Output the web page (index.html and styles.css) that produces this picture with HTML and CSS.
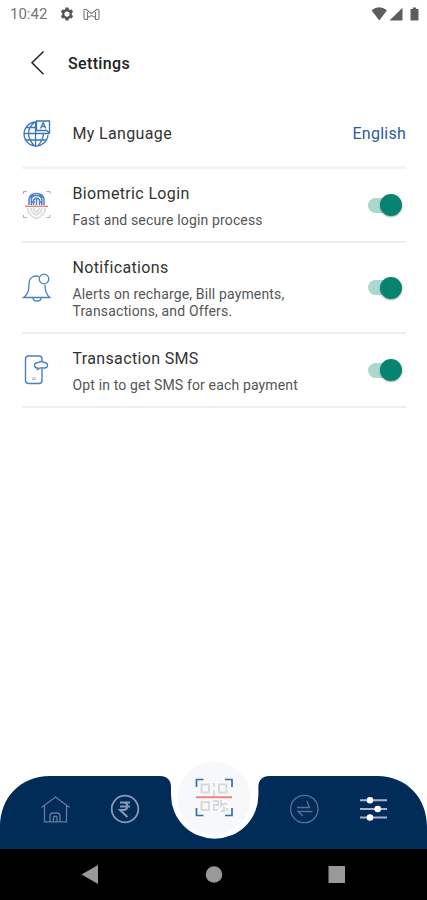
FILE: index.html
```html
<!DOCTYPE html>
<html lang="en">
<head>
<meta charset="utf-8">
<title>Settings</title>
<link rel="stylesheet" href="styles.css">
</head>
<body>
<div class="screen">
  <div class="status">
    <span class="clock">10:42</span>
    <svg class="gear" width="14" height="14" viewBox="0 0 24 24"><path fill="#555" fill-rule="evenodd" d="M9.5 1h5l.6 3 2 1.2 3-1 2.400 4.200-2.300 2v3.200l2.300 2-2.400 4.200-3-1-2 1.200-.6 3.200h-5l-.6-3.200-2-1.200-3 1-2.400-4.200 2.300-2v-3.200l-2.300-2 2.400-4.200 3 1 2-1.200zM12 7.500a4.500 4.500 0 1 0 0 9 4.500 4.500 0 0 0 0-9z"/></svg>
    <svg class="mail" width="17" height="13" viewBox="0 0 17 13"><g fill="none" stroke="#777" stroke-width="1.100"><path d="M4.500 4v7.500h-2a1.500 1.500 0 0 1-1.500-1.500V2.500q.3-1.500 2-1.200L8.500 5.500 14 1.300q1.700-.3 2 1.200V10a1.500 1.500 0 0 1-1.500 1.500h-2V4M4.500 9.500l4-2 4 2"/></g></svg>
    <svg class="signals" width="50" height="14" viewBox="0 0 50 14"><g fill="#5d5d5d"><path d="M.5 3.200Q8.300-2.700 16 3.200L8.300 13.500z"/><path d="M31.500.8v12.700H18.500z"/><path d="M39.500 2h2.300V.5h3.400V2h2.300v11.500h-8z"/></g></svg>
  </div>

  <header class="header">
    <svg width="15" height="26" viewBox="0 0 15 26"><path d="M13.500 1.500 2 12.700l11.500 11.500" fill="none" stroke="#222" stroke-width="1.500"/></svg>
    <h1>Settings</h1>
  </header>

  <main class="list">
    <section class="row language">
      <svg class="icon" width="30" height="30" viewBox="0 0 30 30"><g fill="none" stroke="#3975b8" stroke-width="1.300"><path d="M14 3A12 12 0 1 0 26 16M1.500 14.500H27M4 8.500h10M4 21h20M13.500 3v23.500M12 3.500Q1 14 12 26.500M16 26.500q5-5 5.500-12"/><path d="M14.500 2h13v12l-3-2.500h-10z" fill="#fff"/><path d="m18.500 9.500 2.700-6 2.700 6M19.500 7.500h3.500"/></g></svg>
      <div class="copy"><h2>My Language</h2></div>
      <span class="value">English</span>
    </section>

    <section class="row biometric">
      <svg class="icon" width="30" height="30" viewBox="0 0 30 30"><g fill="none"><path d="M1.500 4V1.500H5M24.500 1.500H28V4M28 25v2.500h-3.500M5 27.500H1.500V25" stroke="#aaa"/><path d="M6 18v3q2 5 8.500 7.500Q21 26 23 21v-3M9 18q0 5 5.500 7 5-2 5.500-7M12 18q0 3 2.500 4 2.500-1 2.500-4" stroke="#dcdee0" stroke-width="2"/><path d="M7 15V9q1-5.500 7.500-5.500T22 9v6M9.300 15V9q.7-3.500 5.200-3.500T19.800 9v6M11.500 15v-5q3-4 6 0v5M14.500 9v6M8 7l4-2M17 5l4 2M10 12h3M17 12h3" stroke="#4d84c0" stroke-width="1.500"/><path d="M3 16.300h23" stroke="#ec7777" stroke-width="1.300"/></g></svg>
      <div class="copy"><h2>Biometric Login</h2><p class="p-bio">Fast and secure login process</p></div>
      <span class="switch"></span>
    </section>

    <section class="row notifications">
      <svg class="icon" width="30" height="30" viewBox="0 0 30 30"><g fill="none" stroke="#4681be" stroke-width="1.300"><path d="M17 3.500Q14 2.300 10.500 4 7 6 7 11c0 6-.5 9-5 13.500h25.500q-4.500-4.500-4.500-12.500M.5 24.500h28M11 25q0 3 4 3t4-3"/><circle cx="22" cy="6" r="4.800"/></g></svg>
      <div class="copy"><h2>Notifications</h2><p class="p-alerts">Alerts on recharge, Bill payments,<br>Transactions, and Offers.</p></div>
      <span class="switch"></span>
    </section>

    <section class="row sms">
      <svg class="icon" width="30" height="30" viewBox="0 0 30 30"><g fill="none" stroke="#4681be" stroke-width="1.400"><path d="M20 6V4q0-3-3-3H6.500q-3 0-3 3v21.500q0 3 3 3H17q3 0 3-3V14"/><path d="M16.500 7.500q2.500-2 5.500 0 3.500 0 3.500 2.800t-3.500 2.700h-4l-2.500 1.500v-1.500q-3 0-3-2.700t4-2.800z"/><path d="M10.500 23q1.500-1 3 0v1.500h-3z" stroke="#b4bac0" stroke-width="1"/></g></svg>
      <div class="copy"><h2>Transaction SMS</h2><p class="p-sms">Opt in to get SMS for each payment</p></div>
      <span class="switch"></span>
    </section>
  </main>

  <nav class="tabs">
    <svg width="427" height="89" viewBox="0 0 427 89">
      <path fill="#022c58" d="M0 89V67C0 38 20 16 50 16h110c7 0 11 4 11 11v8a43.700 43.700 0 0 0 87.400 0v-8c0-7 4-11 11-11H377c30 0 50 22 50 51v22z"/>
      <circle cx="214" cy="38" r="36.500" fill="#f7f8f9"/>
      <g fill="none" stroke="#64799c" stroke-width="1.300"><path d="M41.500 47.500 55.500 37l14 10.500M44.500 45.500v16.300h22V45.500M50 61.800V56q0-3 3-3h4q3 0 3 3v5.800M53.500 61.500v-4.500q1.800-1.500 3.500 0v4.500"/></g>
      <g fill="none" stroke="#8798b5"><circle cx="125" cy="49" r="13.300" stroke-width="1.800"/><path d="M120 42.500h10M120 46.500h10M120 42.500h3.500c5 0 5 7.500 0 7.500H120l7.500 7" stroke-width="2"/></g>
      <g fill="none"><path d="M196.500 27v-7.500h7M225 19.500h7V27M232 48v7.500h-7M203.500 55.500h-7V48" stroke="#356eae" stroke-width="1.700"/><g stroke="#d8dadd" stroke-width="2"><path d="M201.500 24.500h7.500v8h-7.500zM219 24.500h7.500v8H219zM201.500 42h7.500v8h-7.500zM214 23v4M214 30v6"/><path d="M213 41h5v4h-4v5h4M221 40v4h6M220 47l5-4M221 51h3v-4M227 48v3" /></g><path d="M196 37.300h36" stroke="#ef857e" stroke-width="2"/></g>
      <g fill="none" stroke="#596f95" stroke-width="1.300"><circle cx="304.300" cy="49" r="13.700"/><path d="M297 47.500h12.500l-2.500-6.500M312.500 51.500H298l5 4.500"/></g>
      <g stroke="#a8b2cb" stroke-width="2"><path d="M360 40.300h27M360 49h27M360 57.500h27"/></g><g fill="#fff"><circle cx="370" cy="40.300" r="3.300"/><circle cx="377.700" cy="49" r="3.300"/><circle cx="370" cy="57.500" r="3.300"/></g>
    </svg>
  </nav>
  <div class="system">
    <svg width="427" height="51" viewBox="0 0 427 51"><g fill="#999"><path d="M81.500 25.500 98 16v19z"/><circle cx="214" cy="25.500" r="8.300"/><rect x="328.500" y="17" width="16.500" height="17"/></g></svg>
  </div>
</div>
</body>
</html>
```
FILE: styles.css
```css
* { box-sizing: border-box; }
body { margin: 0; background: #fff; font-family: Roboto, "Liberation Sans", sans-serif; color: #333; }
h1, h2, p { margin: 0; font-weight: 400; white-space: nowrap; }
svg { display: block; flex: none; }
.screen { width: 427px; height: 900px; display: flex; flex-direction: column; overflow: hidden; }
.status { height: 28px; padding: 0 6px 0 10px; display: flex; align-items: center; color: #757575; }
.clock { width: 50px; font-size: 15px; line-height: 28px; }
.mail { margin-left: 9px; }
.signals { margin-left: auto; }
.header { height: 70px; padding-left: 30px; display: flex; align-items: center; }
.header h1 { margin-left: 23px; padding-top: 1px; font-size: 16px; font-weight: 500; line-height: 24px; letter-spacing: .35px; color: #222; }
.list { flex: 1; padding: 0 21px 0 22px; }
.row { display: flex; align-items: center; border-bottom: 2px solid #ededed; }
.copy { flex: 1; margin-left: 20.500px; padding-top: 2px; }
.copy h2 { font-size: 16px; line-height: 20px; letter-spacing: .35px; }
.copy p { margin-top: 8px; font-size: 14px; line-height: 16.500px; letter-spacing: .15px; color: #555; }
.language { height: 71px; border-bottom: 3px solid #f5f5f5; }
.language .copy, .value { padding-top: 3px; }
.language .icon { margin-top: 3px; }
.value { font-size: 16px; letter-spacing: .25px; color: #2a5ca0; }
.biometric { height: 74px; }
.notifications { height: 91px; }
.sms { height: 74px; }
.switch { width: 34px; height: 15px; margin-right: 4px; border-radius: 8px; background: #a9d8cf; display: flex; align-items: center; justify-content: flex-end; }
.switch::after { content: ""; flex: none; width: 22px; height: 22px; border-radius: 50%; background: #078374; box-shadow: 0 1px 2px #0005; }
.tabs { height: 89px; }
.system { height: 51px; background: #000; }
```
